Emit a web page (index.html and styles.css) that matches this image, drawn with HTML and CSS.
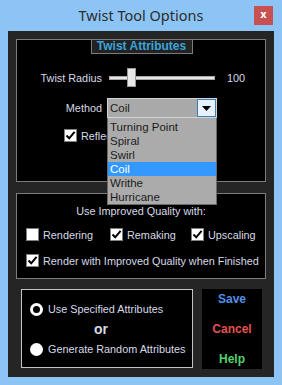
FILE: index.html
```html
<!DOCTYPE html>
<html>
<head>
<meta charset="utf-8">
<link rel="stylesheet" href="styles.css">
</head>
<body>
<div class="window">
  <div class="titlebar">
    <span></span>
    <span class="title">Twist Tool Options</span>
    <span class="close">x</span>
  </div>
  <div class="client">
    <div class="group g1">
      <div class="legend-wrap"><span class="legend">Twist Attributes</span></div>
      <div class="row r1">
        <span class="lbl">Twist Radius</span>
        <div class="slider"><div class="rail"></div><div class="thumb"></div></div>
        <span class="val">100</span>
      </div>
      <div class="row r2">
        <span class="lbl">Method</span>
        <div class="combo">
          <span class="combo-text">Coil</span>
          <span class="combo-btn"><svg width="9" height="5" viewBox="0 0 9 5"><path d="M0 0H9L4.5 5Z" fill="#000"/></svg></span>
        </div>
      </div>
      <div class="row r3">
        <span class="chk"><svg width="11" height="11" viewBox="0 0 11 11"><path d="M1.5 5.5L4.2 8.3L9.6 1.8" fill="none" stroke="#000" stroke-width="2"/></svg></span>
        <span class="txt">Reflect Twist Attributes</span>
      </div>
      <ul class="dropdown">
        <li>Turning Point</li>
        <li>Spiral</li>
        <li>Swirl</li>
        <li class="sel">Coil</li>
        <li>Writhe</li>
        <li>Hurricane</li>
      </ul>
    </div>
    <div class="group g2">
      <div class="g2-title">Use Improved Quality with:</div>
      <div class="opts">
        <div class="opt w1"><span class="chk"></span><span class="txt">Rendering</span></div>
        <div class="opt w2"><span class="chk"><svg width="11" height="11" viewBox="0 0 11 11"><path d="M1.5 5.5L4.2 8.3L9.6 1.8" fill="none" stroke="#000" stroke-width="2"/></svg></span><span class="txt">Remaking</span></div>
        <div class="opt"><span class="chk"><svg width="11" height="11" viewBox="0 0 11 11"><path d="M1.5 5.5L4.2 8.3L9.6 1.8" fill="none" stroke="#000" stroke-width="2"/></svg></span><span class="txt">Upscaling</span></div>
      </div>
      <div class="opt last"><span class="chk"><svg width="11" height="11" viewBox="0 0 11 11"><path d="M1.5 5.5L4.2 8.3L9.6 1.8" fill="none" stroke="#000" stroke-width="2"/></svg></span><span class="txt">Render with Improved Quality when Finished</span></div>
    </div>
    <div class="bottom">
      <div class="radios">
        <div class="radio-row"><span class="radio on"></span><span class="txt">Use Specified Attributes</span></div>
        <div class="or">or</div>
        <div class="radio-row"><span class="radio"></span><span class="txt">Generate Random Attributes</span></div>
      </div>
      <div class="buttons">
        <span class="btn save">Save</span>
        <span class="btn cancel">Cancel</span>
        <span class="btn help">Help</span>
      </div>
    </div>
  </div>
</div>
</body>
</html>
```

FILE: styles.css
```css
* { box-sizing: border-box; }
html, body { margin: 0; padding: 0; }
body {
  width: 282px;
  height: 385px;
  background: #8cc5f5;
  font-family: "Liberation Sans", Arial, sans-serif;
  font-size: 10.85px;
  color: #d6dae6;
  overflow: hidden;
}
.window { width: 282px; height: 385px; }
.titlebar {
  height: 31px;
  display: grid;
  grid-template-columns: 1fr auto 1fr;
  align-items: start;
}
.title {
  font-family: "Noto Sans", "Open Sans", sans-serif;
  font-size: 14.5px;
  color: #2d2d2d;
  line-height: 20px;
  margin-top: 5px;
}
.close {
  justify-self: end;
  margin-top: 6px;
  margin-right: 9px;
  width: 19px;
  height: 19px;
  background: #c75050;
  color: #fff;
  font-family: "DejaVu Sans", sans-serif;
  font-weight: bold;
  font-size: 10px;
  line-height: 17px;
  text-align: center;
}
.client {
  margin: 0 8px;
  height: 346px;
  background: #252525;
  padding: 8px 0 0 8px;
}
.group {
  width: 250px;
  background: #000;
  border: 1px solid #7c7c7c;
}
.g1 { height: 143px; position: relative; z-index: 2; }
.legend-wrap { display: flex; justify-content: center; margin-top: -1px; padding-left: 1px; }
.legend {
  background: #222;
  border: 1px solid #7c7c7c;
  color: #3aa4dc;
  font-weight: bold;
  font-size: 12px;
  line-height: 13px;
  padding: 0 5px;
  width: 102px;
  text-align: center;
}
.row { display: flex; align-items: center; }
.lbl { width: 85px; text-align: right; }
.r1 { height: 19px; margin-top: 14px; }
.slider { position: relative; width: 106px; height: 19px; margin-left: 7px; }
.rail {
  position: absolute;
  left: 0; right: 0; top: 8px;
  height: 4px;
  background: #e6e6e6;
  border: 1px solid #a8a8a8;
}
.thumb {
  position: absolute;
  left: 18px; top: 0;
  width: 9px; height: 19px;
  background: #e8e8e8;
  border: 1px solid #9a9a9a;
}
.val { margin-left: 12px; }
.r2 { height: 20px; margin-top: 11px; }
.combo {
  margin-left: 5px;
  width: 110px;
  height: 20px;
  background: #a9a9a9;
  border: 1px solid #d4d4d4;
  display: flex;
  align-items: center;
  justify-content: space-between;
}
.combo-text { color: #1a1a1a; padding-left: 2px; font-size: 11.5px; }
.combo-btn {
  width: 19px;
  height: 18px;
  background: #e5f1fb;
  border: 1px solid #3c7fb1;
  display: flex;
  align-items: center;
  justify-content: center;
}
.r3 { height: 13px; margin-top: 11px; padding-left: 47px; }
.chk {
  width: 13px; height: 13px;
  background: #fff;
  border: 1px solid #808080;
  display: inline-flex;
  align-items: center;
  justify-content: center;
  flex: none;
}
.txt { margin-left: 4px; white-space: nowrap; }
.dropdown {
  position: absolute;
  left: 90px; top: 78px;
  width: 110px;
  height: 87px;
  margin: 0;
  padding: 2px 0 0 0;
  list-style: none;
  background: #ababab;
  border: 1px solid #6a6a6a;
  border-top: none;
  color: #1c1c1c;
  font-size: 11.5px;
  z-index: 3;
}
.dropdown li { height: 14px; line-height: 14px; padding-left: 2px; }
.dropdown li.sel { background: #3399ff; color: #fff; }
.g2 { height: 86px; margin-top: 11px; padding: 11px 0 0 9px; }
.g2-title { text-align: center; line-height: 13px; padding-right: 9px; }
.opts { display: flex; margin-top: 10px; }
.opt { display: flex; align-items: center; height: 13px; }
.w1 { width: 84px; }
.w2 { width: 81px; }
.last { margin-top: 13px; }
.bottom { display: flex; margin-top: 10px; align-items: flex-start; }
.radios {
  margin-left: 5px;
  width: 172px;
  height: 79px;
  border: 1px solid #c4c4c4;
  background: #000;
  padding: 9px 0 0 8px;
}
.radio-row { display: flex; align-items: center; height: 20px; }
.radio-row .txt { margin-left: 5px; }
.radio {
  width: 13px; height: 13px;
  border-radius: 50%;
  background: #fff;
  flex: none;
  position: relative;
}
.radio.on::after {
  content: "";
  position: absolute;
  left: 3px; top: 3px;
  width: 7px; height: 7px;
  border-radius: 50%;
  background: #000;
}
.or {
  height: 20px;
  line-height: 20px;
  font-weight: bold;
  font-size: 14px;
  padding-left: 64px;
}
.buttons {
  margin-left: 9px;
  width: 60px;
  height: 80px;
  background: #000;
  display: flex;
  flex-direction: column;
  justify-content: space-between;
  align-items: center;
  padding: 3px 0;
}
.btn { font-weight: bold; font-size: 12px; line-height: 14px; }
.save { color: #4f8fe8; }
.cancel { color: #e5504e; }
.help { color: #52d26c; }
```
